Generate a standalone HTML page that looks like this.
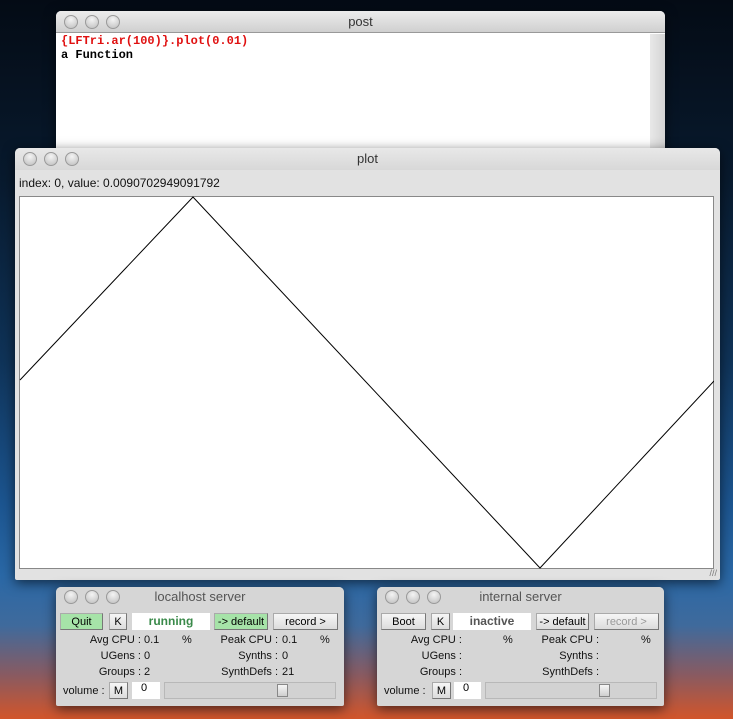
<!DOCTYPE html>
<html><head><meta charset="utf-8"><style>
*{margin:0;padding:0;box-sizing:border-box}
body{width:733px;height:719px;overflow:hidden;position:relative;font-family:"Liberation Sans",sans-serif;
background:linear-gradient(180deg,#040b15 0%,#081a2e 25%,#0f3358 50%,#1c5590 70%,#2a68a6 80%,#3f6a9c 87%,#8a5a60 94%,#d2552a 100%);}
.win{position:absolute;background:#e4e4e4;border-radius:5px 5px 2px 2px;box-shadow:0 3px 12px rgba(0,0,0,.6);overflow:hidden}
.tb{position:absolute;left:0;right:0;top:0;height:22px;background:linear-gradient(#ececec,#d0d0d0);border-bottom:1px solid #999;text-align:center;font-size:13px;line-height:22px;color:#333}
.dots{position:absolute;left:8px;top:3px}
.dots i{display:inline-block;width:14px;height:14px;border-radius:50%;margin-right:7px;background:radial-gradient(circle at 50% 30%,#f4f4f4,#bdbdbd);border:1px solid #9a9a9a}
.sv{background:#d6d6d6}
.sv .tb{height:20px;line-height:20px;background:#d6d6d6;border:none;color:#555;font-size:13px}
.sv .dots{top:3px}
.b{position:absolute;height:17px;font-size:11px;line-height:16px;text-align:center;background:linear-gradient(#f6f6f6,#dcdcdc);border:1px solid #aaa;border-right-color:#777;border-bottom-color:#777;color:#000}
.g{background:#a6e3a8}
.f{position:absolute;height:17px;background:#fff;font-size:12px;font-weight:bold;text-align:center;line-height:17px}
.t{position:absolute;font-size:11px;color:#111;white-space:nowrap}
.r{text-align:right}
.sl{position:absolute;height:17px;border:1px solid #b8b8b8;background:#d2d2d2}
.th{position:absolute;top:1px;width:11px;height:13px;background:linear-gradient(#f6f6f6,#cfcfcf);border:1px solid #888}
</style></head><body>

<div class="win" style="left:56px;top:11px;width:609px;height:150px;background:#fff">
 <div class="tb"><div class="dots"><i></i><i></i><i></i></div>post</div>
 <div style="position:absolute;right:0;top:23px;width:15px;bottom:0;background:linear-gradient(90deg,#e8e8e8,#d4d4d4)"></div>
 <div style="position:absolute;left:5px;top:23px;font-family:'Liberation Mono',monospace;font-weight:bold;font-size:12px;line-height:14px">
  <div style="color:#e01010">{LFTri.ar(100)}.plot(0.01)</div><div>a Function</div></div>
</div>

<div class="win" style="left:15px;top:148px;width:705px;height:432px;background:#e2e2e2">
 <div class="tb" style="border-bottom:none;background:linear-gradient(#e8e8e8,#d8d8d8)"><div class="dots"><i></i><i></i><i></i></div>plot</div>
 <div class="t" style="left:4px;top:28px;font-size:12px">index: 0, value: 0.0090702949091792</div>
 <div style="position:absolute;left:4px;top:48px;width:695px;height:373px;background:#fff;border:1px solid #888">
  <svg width="695" height="373" style="position:absolute;left:-1px;top:-1px"><polyline points="1,184 174,1 521,372 695,185" fill="none" stroke="#000" stroke-width="1"/></svg>
 </div>
 <div style="position:absolute;right:3px;bottom:2px;font-size:9px;color:#777">///</div>
</div>

<div class="win sv" style="left:56px;top:587px;width:288px;height:119px">
 <div class="tb"><div class="dots"><i></i><i></i><i></i></div>localhost server</div>
 <div class="b g" style="left:4px;top:26px;width:43px">Quit</div>
 <div class="b" style="left:53px;top:26px;width:18px">K</div>
 <div class="f" style="left:76px;top:26px;width:78px;color:#3a8a4a">running</div>
 <div class="b g" style="left:158px;top:26px;width:54px">-&gt; default</div>
 <div class="b" style="left:217px;top:26px;width:65px">record &gt;</div>
 <div class="t r" style="left:0;width:85px;top:47px">Avg CPU :</div><div class="t" style="left:88px;top:47px">0.1</div><div class="t" style="left:126px;top:47px">%</div>
 <div class="t r" style="left:100px;width:122px;top:47px">Peak CPU :</div><div class="t" style="left:226px;top:47px">0.1</div><div class="t" style="left:264px;top:47px">%</div>
 <div class="t r" style="left:0;width:85px;top:63px">UGens :</div><div class="t" style="left:88px;top:63px">0</div>
 <div class="t r" style="left:100px;width:122px;top:63px">Synths :</div><div class="t" style="left:226px;top:63px">0</div>
 <div class="t r" style="left:0;width:85px;top:79px">Groups :</div><div class="t" style="left:88px;top:79px">2</div>
 <div class="t r" style="left:100px;width:122px;top:79px">SynthDefs :</div><div class="t" style="left:226px;top:79px">21</div>
 <div class="t" style="left:7px;top:98px">volume :</div>
 <div class="b" style="left:53px;top:95px;width:19px">M</div>
 <div class="f" style="left:76px;top:95px;width:28px;font-weight:normal;font-size:11px;text-align:left;padding-left:9px;line-height:13px">0</div>
 <div class="sl" style="left:108px;top:95px;width:172px"><div class="th" style="left:112px"></div></div>
</div>

<div class="win sv" style="left:377px;top:587px;width:287px;height:119px">
 <div class="tb"><div class="dots"><i></i><i></i><i></i></div>internal server</div>
 <div class="b" style="left:4px;top:26px;width:45px">Boot</div>
 <div class="b" style="left:54px;top:26px;width:19px">K</div>
 <div class="f" style="left:76px;top:26px;width:78px;color:#555">inactive</div>
 <div class="b" style="left:159px;top:26px;width:53px">-&gt; default</div>
 <div class="b" style="left:217px;top:26px;width:65px;color:#999">record &gt;</div>
 <div class="t r" style="left:0;width:85px;top:47px">Avg CPU :</div><div class="t" style="left:126px;top:47px">%</div>
 <div class="t r" style="left:100px;width:122px;top:47px">Peak CPU :</div><div class="t" style="left:264px;top:47px">%</div>
 <div class="t r" style="left:0;width:85px;top:63px">UGens :</div>
 <div class="t r" style="left:100px;width:122px;top:63px">Synths :</div>
 <div class="t r" style="left:0;width:85px;top:79px">Groups :</div>
 <div class="t r" style="left:100px;width:122px;top:79px">SynthDefs :</div>
 <div class="t" style="left:7px;top:98px">volume :</div>
 <div class="b" style="left:55px;top:95px;width:19px">M</div>
 <div class="f" style="left:77px;top:95px;width:27px;font-weight:normal;font-size:11px;text-align:left;padding-left:9px;line-height:13px">0</div>
 <div class="sl" style="left:108px;top:95px;width:172px"><div class="th" style="left:113px"></div></div>
</div>

</body></html>
